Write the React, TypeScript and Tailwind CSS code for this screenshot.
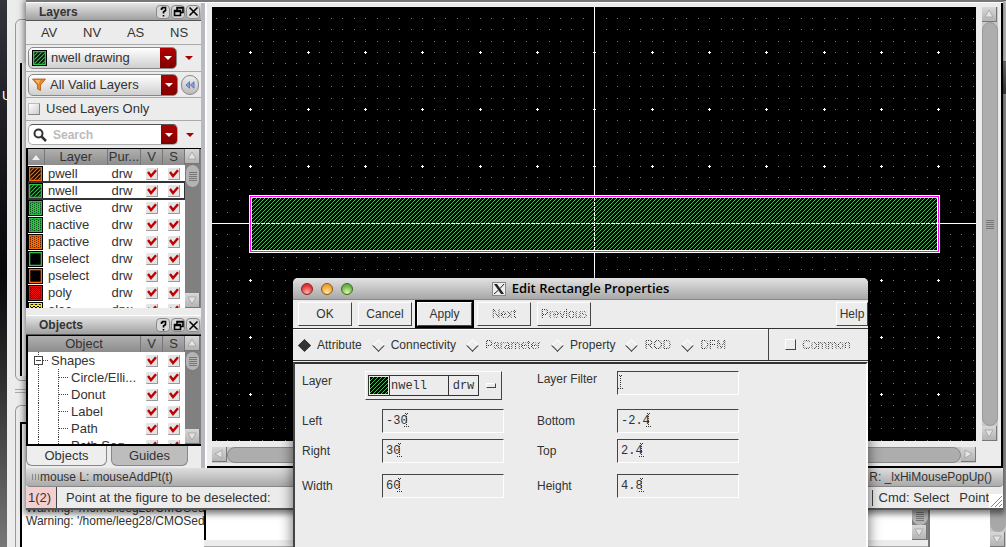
import type { ReactNode } from "react";
import clsx from "clsx";

type Fill = "hatch" | "dots" | "solid" | "dense" | "rings";

const layers: { name: string; color: string; fill: Fill }[] = [
  { name: "pwell", color: "#ff6a00", fill: "hatch" },
  { name: "nwell", color: "#2fc24a", fill: "hatch" },
  { name: "active", color: "#2fc24a", fill: "dots" },
  { name: "nactive", color: "#2fc24a", fill: "dots" },
  { name: "pactive", color: "#ff6a00", fill: "dots" },
  { name: "nselect", color: "#2fc24a", fill: "solid" },
  { name: "pselect", color: "#ff6a00", fill: "solid" },
  { name: "poly", color: "#f01010", fill: "dense" },
  { name: "elec", color: "#fff200", fill: "rings" },
];

const objects = ["Circle/Elli...", "Donut", "Label", "Path", "Path Seg"];

const GRID_X = 57.33;
const GRID_Y = 57;

function Swatch({ color, fill }: { color: string; fill: Fill }) {
  const id = `sw-${fill}-${color.slice(1)}`;
  return (
    <svg width="15" height="16" viewBox="0 0 15 16" className="block shrink-0">
      <defs>
        <pattern id={id} width="4" height="4" patternUnits="userSpaceOnUse">
          {fill === "hatch" && <path d="M-1 1L1 -1M0 4L4 0M3 5L5 3" stroke={color} strokeWidth="1.2" />}
          {fill === "dots" && (
            <>
              <rect width="4" height="4" fill={color} />
              <path d="M0 0h1v1h-1zM2 1h1v1h-1zM0 2h1v1h-1zM2 3h1v1h-1z" fill="#000" opacity=".6" />
            </>
          )}
          {fill === "dense" && (
            <>
              <rect width="4" height="4" fill={color} />
              <path d="M0 0h1v1h-1zM2 0h1v1h-1zM1 1h1v1h-1zM3 1h1v1h-1zM0 2h1v1h-1zM2 2h1v1h-1zM1 3h1v1h-1zM3 3h1v1h-1z" fill="#000" opacity=".5" />
            </>
          )}
          {fill === "rings" && (
            <>
              <rect width="4" height="4" fill={color} />
              <path d="M1 0h2v1h-2zM0 1h1v2h-1zM3 1h1v2h-1z" fill="#000" />
            </>
          )}
        </pattern>
      </defs>
      <rect width="15" height="16" fill="#000" />
      <rect x="1" y="1" width="13" height="14" fill={color} />
      <rect x="2.300" y="2.300" width="10.400" height="11.400" fill="#000" />
      <rect x="2.300" y="2.300" width="10.400" height="11.400" fill={`url(#${id})`} />
    </svg>
  );
}

function Check({ label }: { label: string }) {
  return (
    <span className="grid h-[17px] w-[22px] place-items-center">
      <input
        type="checkbox"
        defaultChecked
        aria-label={label}
        className="col-start-1 row-start-1 size-3 appearance-none rounded-[1px] border-r border-b border-[#999] bg-[#e4e4e4]"
      />
      <svg width="10" height="9" viewBox="0 0 10 9" className="pointer-events-none col-start-1 row-start-1">
        <path d="M1 3L4 7L9 1.2" fill="none" stroke="#c00000" strokeWidth="2.4" />
      </svg>
    </span>
  );
}

function PanelTitle({ title, className }: { title: string; className: string }) {
  return (
    <div
      className={clsx(
        "flex shrink-0 items-center gap-px border-b border-[#555] bg-gradient-to-b from-[#e6e6e6] to-[#a0a0a0] pr-px pl-[13px]",
        className,
      )}
    >
      <h2 className="flex-1 text-[12px] leading-none font-bold text-[#333]">{title}</h2>
      <TitleButton label="Help">
        <path d="M3.5 4V2.500H4.500V1.500H7.500V4.500L5.500 6V7.500M5.500 9V10.500" />
      </TitleButton>
      <TitleButton label="Float">
        <path d="M4 4V1.500H10V6.500H8M1.500 4.500H7.500V9.500H1.500ZM1.500 5.500H7.500M4 2H10" />
      </TitleButton>
      <TitleButton label="Close">
        <path d="M1.500 1.500L9.500 9.500M9.500 1.500L1.500 9.500" />
      </TitleButton>
    </div>
  );
}

function TitleButton({ label, children }: { label: string; children: ReactNode }) {
  return (
    <button aria-label={label} className="grid size-[14px] place-items-center rounded-[4px] border border-[#8a8a8a] bg-[#d8d8d8]">
      <svg width="11" height="11" viewBox="0 0 11 11" fill="none" stroke="#000" strokeWidth="1.6">
        {children}
      </svg>
    </button>
  );
}

function RedArrow() {
  return (
    <span className="pointer-events-none grid h-full w-4 shrink-0 place-items-center rounded-r-[4px] bg-gradient-to-b from-[#b00000] to-[#800000]">
      <svg width="8" height="4" viewBox="0 0 8 4">
        <path d="M0 0H8L4 4Z" fill="#fff" />
      </svg>
    </span>
  );
}

function SideArrow({ label }: { label: string }) {
  return (
    <button aria-label={label} className="grid h-4 w-6 place-items-center">
      <svg width="8" height="4" viewBox="0 0 8 4">
        <path d="M0 0H8L4 4Z" fill="#a80000" />
      </svg>
    </button>
  );
}

function ArrowButton({ dir }: { dir: "up" | "down" | "left" | "right" }) {
  const d = {
    up: "M5 1L9 8H1Z",
    down: "M5 9L9 2H1Z",
    left: "M1 5L8 1V9Z",
    right: "M9 5L2 1V9Z",
  }[dir];
  return (
    <button
      aria-label={`Scroll ${dir}`}
      className="grid size-[15px] shrink-0 place-items-center border-r border-b border-[#777] bg-gradient-to-b from-[#d8d8d8] to-[#b4b4b4]"
    >
      <svg width="10" height="10" viewBox="0 0 10 10">
        <path d={d} fill="#e4e4e4" stroke="#999" strokeWidth=".7" />
      </svg>
    </button>
  );
}

function Grip() {
  return <span className="flex h-[9px] w-2 bg-[repeating-linear-gradient(#777_0_1px,transparent_1px_2px)]" />;
}

function ListScrollbar({ thumb }: { thumb: string }) {
  return (
    <div className="flex w-4 shrink-0 flex-col bg-[#808080]">
      <ArrowButton dir="up" />
      <div className={clsx("grid w-[15px] place-items-center rounded-full border border-[#777] bg-[#b4b4b4]", thumb)}>
        <Grip />
      </div>
      <div className="flex-1" />
      <ArrowButton dir="down" />
    </div>
  );
}

const headCell = "h-4 border-r border-[#777] bg-gradient-to-b from-[#b0b0b0] to-[#8c8c8c] p-0 text-center font-normal text-[#333]";

function LayersPanel() {
  return (
    <>
      <PanelTitle title="Layers" className="h-[18px]" />
      <div className="flex h-6 shrink-0 items-center justify-around border-b border-[#aaa] pl-0.5">
        {["AV", "NV", "AS", "NS"].map((t) => (
          <button key={t}>{t}</button>
        ))}
      </div>
      <div className="flex h-[27px] shrink-0 items-center border-b border-[#aaa] pl-0.5">
        <div className="flex h-[22px] w-[150px] items-center rounded-[5px] border border-[#888] bg-gradient-to-b from-white to-[#cfcfcf] pl-[3px]">
          <Swatch color="#2fc24a" fill="hatch" />
          <select aria-label="Current layer" className="min-w-0 flex-1 appearance-none pl-1 outline-none">
            <option>nwell drawing</option>
          </select>
          <RedArrow />
        </div>
        <SideArrow label="Layer options" />
      </div>
      <div className="flex h-[26px] shrink-0 items-center gap-[3px] border-b border-[#aaa] pl-0.5">
        <div className="flex h-[22px] w-[150px] items-center rounded-[5px] border border-[#888] bg-gradient-to-b from-white to-[#cfcfcf] pl-[3px]">
          <svg width="14" height="14" viewBox="0 0 14 14" className="shrink-0">
            <path d="M.5 1H13.500L8.500 7V12.500L5.500 11V7Z" fill="#e8862a" stroke="#a85a10" strokeWidth=".8" />
            <path d="M3 2H8L6.500 6Z" fill="#f8b870" />
          </svg>
          <select aria-label="Layer filter set" className="min-w-0 flex-1 appearance-none pl-1 outline-none">
            <option>All Valid Layers</option>
          </select>
          <RedArrow />
        </div>
        <button aria-label="Collapse" className="grid h-5 w-[18px] place-items-center rounded-full border border-[#888] bg-gradient-to-b from-[#eee] to-[#bbb]">
          <svg width="10" height="8" viewBox="0 0 10 8" fill="#8ca4e0" stroke="#4a64b0" strokeWidth=".8">
            <path d="M4.500 .8V7.200L1 4ZM9 .8V7.200L5.500 4Z" />
          </svg>
        </button>
      </div>
      <label className="flex h-[23px] shrink-0 items-center gap-1.5 border-b border-[#aaa] pl-0.5">
        <input
          type="checkbox"
          className="size-3 appearance-none border border-t-[#bbb] border-r-[#888] border-b-[#888] border-l-[#bbb] bg-gradient-to-br from-white to-[#ccc]"
        />
        Used Layers Only
      </label>
      <div className="flex h-[27px] shrink-0 items-center pl-0.5">
        <div className="flex h-[21px] w-[150px] items-center rounded-[5px] border border-t-[#555] border-r-[#aaa] border-b-[#aaa] border-l-[#aaa] bg-white pl-1">
          <svg width="14" height="14" viewBox="0 0 14 14" fill="none" className="shrink-0">
            <circle cx="5.500" cy="5.500" r="4" stroke="#333" strokeWidth="2" />
            <path d="M8.500 8.500L13 13" stroke="#333" strokeWidth="2.500" />
          </svg>
          <input
            aria-label="Search"
            placeholder="Search"
            className="min-w-0 flex-1 pl-[6px] text-[12px] font-bold outline-none placeholder:text-[#bbb]"
          />
          <RedArrow />
        </div>
        <SideArrow label="Search options" />
      </div>
      <div className="flex h-40 shrink-0 border-t border-l-2 border-black bg-white">
        <div className="min-w-0 flex-1 overflow-hidden">
          <table className="w-full table-fixed border-collapse">
            <thead>
              <tr>
                <th aria-label="Sort" className={clsx(headCell, "w-4")}>
                  <svg width="8" height="5" viewBox="0 0 8 5" className="mx-auto">
                    <path d="M0 5L4 0L8 5Z" fill="#eee" />
                  </svg>
                </th>
                <th className={headCell}>Layer</th>
                <th className={clsx(headCell, "w-[33px]")}>Pur...</th>
                <th className={clsx(headCell, "w-[22px]")}>V</th>
                <th className={clsx(headCell, "w-[22px]")}>S</th>
              </tr>
            </thead>
            <tbody>
              {layers.map((l) => (
                <tr key={l.name} className={l.name === "nwell" ? "outline-2 -outline-offset-1 outline-[#333]" : undefined}>
                  <td className="h-[17px] p-0">
                    <Swatch color={l.color} fill={l.fill} />
                  </td>
                  <td className="p-0 pl-1">{l.name}</td>
                  <td className="p-0 pl-1">drw</td>
                  <td className="p-0">
                    <Check label={`${l.name} visible`} />
                  </td>
                  <td className="p-0">
                    <Check label={`${l.name} selectable`} />
                  </td>
                </tr>
              ))}
            </tbody>
          </table>
        </div>
        <ListScrollbar thumb="h-6" />
      </div>
    </>
  );
}

function ObjectsPanel() {
  return (
    <>
      <PanelTitle title="Objects" className="mt-[7px] h-5 border-t border-t-white" />
      <div className="flex min-h-0 flex-1 border-t border-b-2 border-l-2 border-black bg-white">
        <div className="min-w-0 flex-1 overflow-hidden">
          <table className="w-full table-fixed border-collapse">
            <thead>
              <tr>
                <th className={headCell}>Object</th>
                <th className={clsx(headCell, "w-[22px]")}>V</th>
                <th className={clsx(headCell, "w-[22px]")}>S</th>
              </tr>
            </thead>
            <tbody>
              <tr>
                <td className="h-[17px] p-0">
                  <span className="flex items-center">
                    <svg width="21" height="17" viewBox="0 0 21 17" fill="none" stroke="#444" shapeRendering="crispEdges" className="mr-0.5">
                      <rect x="6.500" y="4.500" width="8" height="8" />
                      <path d="M8 8.500H13" />
                      <path d="M15 8.500H21M10.500 0V4M10.500 13V17" strokeDasharray="1 1" />
                    </svg>
                    Shapes
                  </span>
                </td>
                <td className="p-0">
                  <Check label="Shapes visible" />
                </td>
                <td className="p-0">
                  <Check label="Shapes selectable" />
                </td>
              </tr>
              {objects.map((o) => (
                <tr key={o}>
                  <td className="h-[17px] p-0">
                    <span className="flex items-center whitespace-nowrap">
                      <svg width="40" height="17" viewBox="0 0 40 17" stroke="#444" strokeDasharray="1 1" shapeRendering="crispEdges" className="mr-[3px]">
                        <path d="M10.500 0V17M30.500 0V17M31 8.500H40" fill="none" />
                      </svg>
                      {o}
                    </span>
                  </td>
                  <td className="p-0">
                    <Check label={`${o} visible`} />
                  </td>
                  <td className="p-0">
                    <Check label={`${o} selectable`} />
                  </td>
                </tr>
              ))}
            </tbody>
          </table>
        </div>
        <ListScrollbar thumb="h-5" />
      </div>
      <div className="flex h-[22px] shrink-0 gap-1 pb-0.5">
        <button className="w-[81px] rounded-b-[6px] border border-t-0 border-[#888] bg-[#eee]">Objects</button>
        <button className="w-[77px] rounded-b-[6px] border border-t-0 border-[#888] bg-[#bdbdbd]">Guides</button>
      </div>
    </>
  );
}

// origin of the layout sits at (382, 216) inside the canvas
function LayoutCanvas() {
  const minor: ReactNode[] = [];
  const major: ReactNode[] = [];
  for (let i = -33; i <= 60; i++) {
    for (let j = -18; j <= 40; j++) {
      const x = Math.round(382.4 + (i * GRID_X) / 5);
      const y = Math.round(216 + (j * GRID_Y) / 5);
      if (y < 8) continue;
      if (i % 5 === 0 && j % 5 === 0) {
        major.push(<path key={`${i},${j}`} d={`M${x - 1} ${y}h3v1h-3zM${x} ${y - 1}h1v3h-1z`} fill="#fff" />);
      } else {
        minor.push(<rect key={`${i},${j}`} x={x} y={y} width="1" height="1" fill="#77778c" />);
      }
    }
  }
  return (
    <svg width="100%" height="100%" shapeRendering="crispEdges" className="block min-h-0 min-w-0 flex-1 bg-black" role="img" aria-label="Layout">
      <defs>
        <pattern id="nwell" width="4" height="4" patternUnits="userSpaceOnUse">
          {[0, 1, 2, 3].map((i) => (
            <rect key={i} x={3 - i} y={i} width="1" height="1" fill="#3fc455" />
          ))}
        </pattern>
      </defs>
      {minor}
      {major}
      <path d="M0 216.500H3000M382.500 0V3000" stroke="#fff" />
      <rect x="37" y="188" width="691" height="58" fill="#fff" />
      <rect x="38" y="189" width="689" height="56" fill="#ff00ff" />
      <rect x="39" y="190" width="687" height="54" fill="#fff" />
      <rect x="40" y="191" width="685" height="52" fill="#000" />
      <rect x="40" y="191" width="685" height="52" fill="url(#nwell)" />
      <path d="M39 216.500H727M382.500 190V244" stroke="#fff" strokeDasharray="4 1" />
    </svg>
  );
}

function CanvasArea() {
  return (
    <div className="flex min-w-0 flex-1 flex-col border-r-2 border-b-2 border-black bg-[#ececec] pt-1 pl-[5px]">
      <div className="flex min-h-0 flex-1">
        <LayoutCanvas />
        <div className="mr-[3px] ml-1.5 flex w-4 shrink-0 flex-col bg-[#c8c8c8]">
          <ArrowButton dir="up" />
          <div className="grid flex-1 place-items-center rounded-full border border-[#999] bg-[#adadad]">
            <Grip />
          </div>
          <ArrowButton dir="down" />
        </div>
      </div>
      <div className="mt-1.5 mr-[25px] mb-[3px] flex h-4 shrink-0 bg-[#c8c8c8]">
        <ArrowButton dir="left" />
        <div className="flex-1 rounded-full border border-[#888] bg-[#adadad]" />
        <ArrowButton dir="right" />
      </div>
    </div>
  );
}

function EditorWindow() {
  return (
    <main className="absolute top-0 right-[3px] bottom-[37px] left-[26px] flex flex-col border-b-2 border-[#555] bg-[#ececec] shadow-[0_2px_6px_2px_rgba(0,0,0,0.5)]">
      <div className="h-[3px] shrink-0 border-b border-white bg-[#777]" />
      <div className="flex min-h-0 flex-1">
        <aside className="flex w-[175px] shrink-0 flex-col">
          <LayersPanel />
          <ObjectsPanel />
        </aside>
        <div className="w-1.5 shrink-0 border-r-2 border-r-white bg-[#b8b8c0]" />
        <CanvasArea />
      </div>
      <div className="flex h-[19px] shrink-0 items-center justify-between rounded-[4px] border-b border-[#888] bg-gradient-to-b from-[#dedede] to-[#aaa] pr-[11px] pl-1.5 text-[12px]">
        <span className="flex items-center">
          <span className="h-1.5 w-2 bg-[repeating-linear-gradient(90deg,#888_0_1px,transparent_1px_3px)]" />
          mouse L: mouseAddPt(t)
        </span>
        <span>R: _lxHiMousePopUp()</span>
      </div>
      <div className="flex h-[21px] shrink-0 items-center">
        <span className="flex h-full w-[31px] items-center border-r border-[#444] bg-[#f3cfcf] pl-0.5">1(2)</span>
        <span className="flex-1 pl-[9px]">Point at the figure to be deselected:</span>
        <span className="border-l border-[#444] pl-1.5">Cmd: Select</span>
        <span className="pl-2.5">Point</span>
        <svg width="14" height="14" viewBox="0 0 14 14" className="mt-auto bg-white">
          <path d="M2 13L13 2M6 13L13 6M10 13L13 10" stroke="#888" />
        </svg>
      </div>
    </main>
  );
}

function BackWindow() {
  return (
    <div className="absolute inset-y-0 right-0 left-[7px] flex bg-[#ececec]">
      <div className="flex w-[197px] shrink-0 flex-col overflow-hidden pl-2">
        <div className="mt-[19px] h-[362px] rounded-l-[6px] border border-[#999] pt-[43px] pb-1 pl-1">
          <div className="h-full border-l-2 border-black bg-white" />
        </div>
        <div className="mt-2 h-1 border-y border-[#aaa]" />
        <div className="mt-3 flex flex-1 flex-col rounded-tl-[6px] border-t border-l border-[#999] pt-4 pl-1">
          <div className="flex flex-1 flex-col justify-end border-t-2 border-l-2 border-black bg-white pb-[19px] pl-1 text-[12px] leading-[13px] whitespace-nowrap">
            <p>Warning: '/home/leeg28/CMOSedu</p>
            <p>Warning: '/home/leeg28/CMOSedu</p>
          </div>
        </div>
      </div>
      <div className="flex flex-1 flex-col">
        <div className="flex flex-1 border-l-2 border-black bg-white">
          <div className="flex-1" />
          <div className="flex w-4 flex-col bg-[#808080]">
            <div className="grid flex-1 place-items-end justify-center rounded-full bg-[#b4b4b4] pb-1">
              <Grip />
            </div>
            <ArrowButton dir="down" />
          </div>
        </div>
        <div className="h-[7px] border-b border-[#aaa]" />
      </div>
      <div className="flex w-[78px] shrink-0 border-l-2 border-[#777] bg-white">
        <div className="flex-1" />
        <div className="flex w-4 flex-col bg-[#c8c8c8]">
          <div className="h-[62px] border-y border-[#777] bg-[#e4e4e4]" />
          <div className="h-8 bg-gradient-to-b from-[#888] to-[#444]" />
          <div className="flex-1 rounded-b-full bg-[#a8a8a8]" />
          <ArrowButton dir="down" />
        </div>
      </div>
    </div>
  );
}

const raised = "border-t border-l border-r border-b border-t-white border-l-white border-r-[#444] border-b-[#444]";
const stipple =
  "bg-[repeating-conic-gradient(#333_0_25%,transparent_0_50%)] bg-[length:2px_2px] bg-clip-text text-transparent";

function FormButton({ children, disabled, isDefault, width }: { children: string; disabled?: boolean; isDefault?: boolean; width: string }) {
  const face = (
    <button disabled={disabled} className={clsx("h-6", raised, width)}>
      <span className={disabled ? stipple : undefined}>{children}</span>
    </button>
  );
  return isDefault ? <span className="-mx-0.5 flex border border-black outline outline-black">{face}</span> : face;
}

function Tab({ label, disabled, checked }: { label: string; disabled?: boolean; checked?: boolean }) {
  return (
    <label className="flex items-center gap-2">
      <input
        type="radio"
        name="page"
        disabled={disabled}
        defaultChecked={checked}
        className="size-[9px] rotate-45 appearance-none border border-t-white border-r-[#333] border-b-[#333] border-l-white checked:border-[#333] checked:bg-[#333]"
      />
      <span className={disabled ? stipple : undefined}>{label}</span>
    </label>
  );
}

function Field({ label, value }: { label: string; value: string }) {
  const id = label.toLowerCase().replace(" ", "-");
  return (
    <div className="flex items-start">
      <label htmlFor={id} className={clsx("w-20", value ? "leading-6" : "leading-4")}>
        {label}
      </label>
      <div className="relative">
        <input
          id={id}
          defaultValue={value}
          className="block h-6 w-[122px] border border-t-[#444] border-r-white border-b-white border-l-[#444] pl-[3px] font-['Liberation_Mono',monospace] text-[12px] outline-none"
        />
        <svg
          width="5"
          height="14"
          viewBox="0 0 5 14"
          shapeRendering="crispEdges"
          className="pointer-events-none absolute top-1"
          style={{ left: 1 + value.length * 7 }}
        >
          <path d="M1 .5H2M3 .5H4M0 13.500H1M2 13.500H3M4 13.500H5M2.500 1V13" stroke="#333" strokeDasharray="1 1" />
        </svg>
      </div>
    </div>
  );
}

function PropertiesDialog() {
  return (
    <section
      aria-label="Edit Rectangle Properties"
      className="absolute top-[278px] bottom-0 left-[293px] flex w-[575px] flex-col rounded-t-[5px] bg-[#ececec] text-[12px] shadow-[0_4px_14px_rgba(0,0,0,0.6)]"
    >
      <header className="flex h-[22px] shrink-0 items-center rounded-t-[5px] border-b border-[#888] bg-gradient-to-b from-[#e2e2e2] to-[#a8a8a8] pl-2">
        <div className="flex w-0 gap-2">
          <button aria-label="Close window" className="size-3 shrink-0 rounded-full border border-[#8a2020] bg-[radial-gradient(circle_at_50%_85%,#ffb0a8,#e03030_70%)]" />
          <button aria-label="Minimize window" className="size-3 shrink-0 rounded-full border border-[#8a5a10] bg-[radial-gradient(circle_at_50%_85%,#ffe898,#f0a030_70%)]" />
          <button aria-label="Zoom window" className="size-3 shrink-0 rounded-full border border-[#3a6a20] bg-[radial-gradient(circle_at_50%_85%,#d8f8a8,#68b048_70%)]" />
        </div>
        <div className="flex flex-1 items-center justify-center gap-1.5 pr-2">
          <svg width="14" height="14" viewBox="0 0 14 14">
            <rect x=".5" y=".5" width="13" height="13" fill="#eee" stroke="#888" />
            <path d="M2 2H5L12 12H9Z" fill="#222" />
            <path d="M12 2L8 6.500M6 8.500L2 12" stroke="#222" />
          </svg>
          <h1 className="font-['Open_Sans',sans-serif] text-[13px] leading-none font-semibold text-black">Edit Rectangle Properties</h1>
        </div>
      </header>
      <div className="flex h-[29px] shrink-0 items-center gap-1.5 border-b border-[#333] pl-[5px]">
        <FormButton width="w-[54px]">OK</FormButton>
        <FormButton width="w-[54px]">Cancel</FormButton>
        <FormButton width="w-[55px]" isDefault>
          Apply
        </FormButton>
        <FormButton width="w-[54px]" disabled>
          Next
        </FormButton>
        <FormButton width="w-[54px]" disabled>
          Previous
        </FormButton>
        <span className="flex-1" />
        <FormButton width="w-8">Help</FormButton>
      </div>
      <div className="flex h-[32px] shrink-0 border-b border-[#333]">
        <div className="flex flex-1 items-center gap-3 border-t border-white pl-[7px]">
          <Tab label="Attribute" checked />
          <Tab label="Connectivity" />
          <Tab label="Parameter" disabled />
          <Tab label="Property" />
          <Tab label="ROD" disabled />
          <Tab label="DFM" disabled />
        </div>
        <label className="flex w-[100px] items-center gap-1.5 border-l border-[#444] pl-4">
          <input type="checkbox" disabled className="size-[11px] appearance-none border border-t-white border-r-[#444] border-b-[#444] border-l-white" />
          <span className={stipple}>Common</span>
        </label>
      </div>
      <div className="mt-px grid flex-1 grid-cols-[235px_1fr] grid-rows-[38px_30px_35px_24px] border-t-2 border-r-2 border-l-2 border-t-[#333] border-r-white border-l-[#444] pt-[7px] pl-[7px]">
        <div className="flex items-start">
          <label htmlFor="layer" className="w-[63px] pt-0.5">
            Layer
          </label>
          <div className={clsx("flex h-[29px] w-[137px] items-center pl-0.5 font-['Liberation_Mono',monospace]", raised)}>
            <div className="flex h-[21px] items-center border border-[#333]">
              <svg width="18" height="17" viewBox="0 0 18 17" shapeRendering="crispEdges" className="mx-px">
                <rect width="18" height="17" fill="#000" />
                <rect width="18" height="17" fill="url(#nwell)" />
              </svg>
              <select id="layer" className="h-full w-[60px] appearance-none border-r border-l border-[#333] pl-px outline-none">
                <option>nwell</option>
              </select>
              <span className="w-[29px] text-center">drw</span>
            </div>
            <span className={clsx("ml-[7px] h-[5px] w-2.5", raised)} />
          </div>
        </div>
        <Field label="Layer Filter" value="" />
        <Field label="Left" value="-30" />
        <Field label="Bottom" value="-2.4" />
        <Field label="Right" value="30" />
        <Field label="Top" value="2.4" />
        <Field label="Width" value="60" />
        <Field label="Height" value="4.8" />
      </div>
    </section>
  );
}

export default function App() {
  return (
    <div className="relative h-screen overflow-hidden bg-gradient-to-b from-[#33333c] via-[#08080a] to-[#777] font-['Liberation_Sans',Arial,sans-serif] text-[13px] leading-4 text-[#333]">
      <span className="absolute top-[88px] left-0.5 text-white">U</span>
      <BackWindow />
      <EditorWindow />
      <PropertiesDialog />
    </div>
  );
}
